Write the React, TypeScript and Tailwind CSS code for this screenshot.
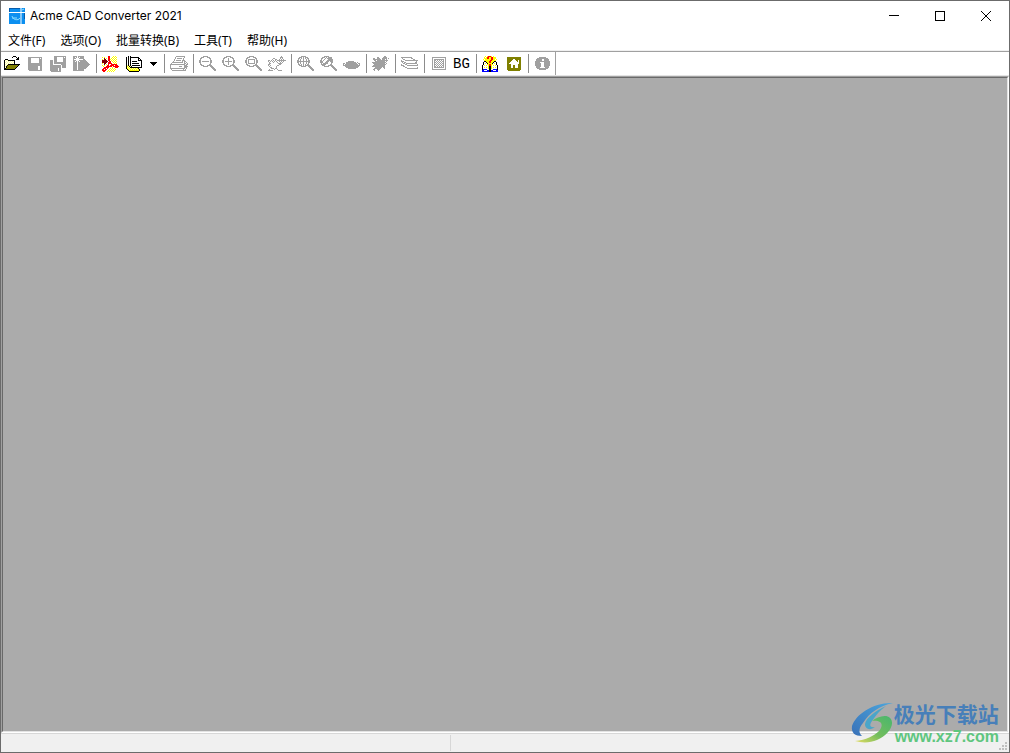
import React from 'react';

const PALETTE: Record<string, string> = {
  k: '#000000',
  w: '#ffffff',
  y: '#ffff00',
  c: '#ffff99',
  d: '#808000',
  o: '#a0a0a0',
  r: '#ff0000',
  m: '#800000',
  b: '#0000ff',
};

const OPEN = [
  '',
  '..........kkk',
  '.........k...k.k',
  '..............kk',
  '..kkk........kkk',
  '.kcwckkkkkkk',
  '.kwcwcwcwcwk',
  '.kcwcwcwcwck',
  '.kwcwcwcwcwk',
  '.kcwckkkkkkkkkkkk',
  '.kwckddddddddddk',
  '.kckddddddddddk',
  '.kwkdddddddddk',
  '.kkdddddddddk',
  '.kkkkkkkkkkk',
];

const SAVE = [
  '',
  '',
  '..oooooooooooooo',
  '..ooo........o.o',
  '..ooo........ooo',
  '..ooo........ooo',
  '..ooo........ooo',
  '..ooo........ooo',
  '..oooooooooooooo',
  '..oooooooooooooo',
  '..oooooooooooooo',
  '..oooooooooo..oo',
  '..oooooooooo..oo',
  '..oooooooooo..oo',
  '..oooooooooo..oo',
  '...ooooooooooooo',
];

const SAVE_ALL = [
  '',
  '.....oooooooooooo',
  '.....ooo......o.o',
  '.....ooo......ooo',
  '.....ooo......ooo',
  '.ooo.ooo......ooo',
  '.ooo.ooo......ooo',
  '.ooo.oooooooooooo',
  '.ooo.oooooooooooo',
  '.ooo........ooooo',
  '.ooooooooooo.oooo',
  '.ooooooooooo.oooo',
  '.ooooooooooo.oooo',
  '.oooooooo.oo',
  '.oooooooo.oo',
  '.oooooooo.oo',
  '..oooooooooo',
];

const EXPORT = [
  '',
  '.oooo.oooooo',
  '.oo.o.o.oooo',
  '.ooo...ooooo',
  '.o.........oo',
  '.ooo...ooooooo',
  '.oo.o.o.ooooooo',
  '.oooo.oooooooooo',
  '.oooo.ooooooooooo',
  '.oooo.oooooooooooo',
  '.oooo.ooooooooooo',
  '.oooo.oooooooooo',
  '.oooo.ooooooooo',
  '.oooo.oooooooo',
  '.oooo.oooooo',
  '.ooooooooooo',
];

const ACROBAT = [
  '',
  '.......rr...y.y',
  '.y.y...rr..y.y.y',
  '...m.y.rr.y.y.y',
  '.y.mm..rry.y.y.y',
  '.mmmmm.rr.y.y.y',
  '.mmmmmm.rr.y.y.y',
  '.mmmmm.rrr..y.y',
  '.y.mm..rrrr..y.y',
  '...m.y.r..rrrrrr',
  '.y.y..rr.rrrr.rrr',
  '..y..rrrrrr.rrrrrr',
  '...rrrrr...y..rrr',
  '..rrr.r..y.y.y',
  '.rr.rr..y.y.y.y',
  '.rrrr..y.y.y.y',
  '..rr..y.y.y.y',
];

const BATCH = [
  '',
  '....k.k',
  '..k.kwkkkkkkkkk',
  '..kwkwkwwwwwwwkk',
  '..kwkwkwwwwwwwkwk',
  '..kwkwkwwwwwwwkkkk',
  '..kwkwkwkkkkkwwwwk',
  '..kwkwkwwwwwwwwwwk',
  '..kwkwkwkkkkkkkwwk',
  '..kwkwkwwwwwwwwwwk',
  '..kckckwkkkkkkkkwk',
  '..kyckckwwwwwwwwwk',
  '..kcyckkkkkkkkkkkk',
  '..kycycycycycyk',
  '...kycycycycycyk',
  '....kyyyyyyyyyyk',
  '.....kkkkkkkkkk',
];

const PRINT = [
  '',
  '.......ooooooooo',
  '......o........o',
  '......o.ooooo.o',
  '.....o........o',
  '.....o.ooooo.ooo',
  '....o........o.oo',
  '...ooooooooooo.o.o',
  '..o............oo.o',
  '.ooooooooooooooo.oo',
  '.o.............ooo',
  '.o........ooo..oooo',
  '.o.............ooo',
  '.ooooooooooooooo.o',
  '..o...........o.o',
  '...oooooooooooooo',
];

const LENS = [
  '',
  '.....ooooo',
  '...ooo...ooo',
  '..oo.......oo',
  '..o.........o',
  '.oo.........oo',
  '.oo.........oo',
  '.oo.........oo',
  '..o.........o',
  '..oo.......oo',
  '...ooo...ooooo',
  '.....ooooo..ooo',
  '.............ooo',
  '..............ooo',
  '...............ooo',
  '................oo',
];

const MINUS = ['', '', '', '', '', '', '....ooooooo'];
const PLUS = ['', '', '', '.......o', '.......o', '.......o', '....ooooooo', '.......o', '.......o', '.......o'];
const FRAME = ['', '', '', '', '....ooooooo', '....o.....o', '....o.....o', '....o.....o', '....ooooooo'];
const GLOBE = [
  '',
  '',
  '.......o',
  '.....o.o.o',
  '....o..o..o',
  '....o..o..o',
  '..ooooooooooo',
  '....o..o..o',
  '....o..o..o',
  '.....o.o.o',
  '.......o',
];
const POINTER = [
  '',
  '',
  '.......o..o.o',
  '......o.oooo',
  '.....o...ooo.o',
  '....o...oooo',
  '...o...ooo.o',
  '...o..ooo',
  '....ooooo',
  '....ooo',
];

const PAN = [
  '',
  '..............o',
  '.............ooo',
  '......oo.....o.o',
  '.....o..oo..o.o.o',
  '.oo.o.o.o.ooooooooo',
  '.o.o.o.o.o..o.o.o',
  '..o...o...o..o.o',
  '..oo.......oooo',
  '.oo.........oo',
  '.o.o......oo',
  '..o......o',
  '...oo....o',
  '....ooo.oo',
  '..o....o..o',
  '.ooooo.....oooo',
];

const PLANET = [
  '',
  '',
  '',
  '',
  '',
  '',
  '......oooooo',
  '....oooooooooo.o',
  '.oo.ooooooooooo.oo',
  '.o.ooooooooooooo.o',
  '.ooooooooooooooooo',
  '...oooooooooooooo',
  '....oooooooooooo',
  '......oooooooo',
];

const REGEN = [
  '',
  '.............oo',
  '......oo....oooo',
  '..oo..ooo..ooooo.o',
  '..oooooooo.ooo.o',
  '...oo.ooooooooooo',
  '....oooooooooo.o',
  '.oooooooooooooo',
  '..oooooooooooo.o',
  '...oooooooooooo',
  '..oooooooooooo',
  '.ooooooooooooo',
  '....ooooooo.oo',
  '...ooooooo...o',
  '..oo..ooo',
  '...o...o',
];

const LAYERS = [
  '',
  '',
  '.ooooooooooo',
  '..o........oo',
  '...oo........oo',
  '.o...ooooooooooooo',
  '.ooo............o',
  '..o.oo.........oo',
  '...oo.ooooooooooo',
  '.o...oo..........o',
  '.ooo...ooooooooooo',
  '...oo',
  '.....oo..........o',
  '.......ooooooooooo',
];

const GRID = [
  '',
  '',
  '...oooooooooooooo',
  '...o............o',
  '...o.oooooooooo.o',
  '...o.oo.o.o.o.o.o',
  '...o.o.o.o.o.oo.o',
  '...o.oo.o.o.o.o.o',
  '...o.o.o.o.o.oo.o',
  '...o.oo.o.o.o.o.o',
  '...o.o.o.o.o.oo.o',
  '...o.oo.o.o.o.o.o',
  '...o.oooooooooo.o',
  '...o............o',
  '...oooooooooooooo',
];

const HELP = [
  '',
  '....y.yrrry.y',
  '...y.yrryyrryyy',
  '...yyyrryyrryyy',
  '..y.yyyyyyrryy.y',
  '...yyyyyyrryyyy',
  '...kkyyyrryyykk',
  '..kwwkyyrryykwwk',
  '..kwywkyyyykwywk',
  '..kwwwyyrryywwwk',
  '.kwywywyrrywywywk',
  '.kwwwwwykkywwwwwk',
  '.kwywywykkywywywk',
  '.kwwwwwykkywwwwwk',
  '.kbbbbwwkkwwbbbbk',
  '.bbwwwbbkkbbwwwbb',
  '.bbbbbbbkkbbbbbbb',
];

const HOME = [
  '',
  '',
  '...dddddddddddddd',
  '...dddddddddddddd',
  '...ddddddwwdddddd',
  '...dddddwwwwddwdd',
  '...ddddwwwwwwdwdd',
  '...dddwwwwwwwwwdd',
  '...ddwwwwwwwwwwdd',
  '...ddddwwwwwwwddd',
  '...ddddwwddwwwddd',
  '...ddddwwddwwwddd',
  '...ddddwwddwwwddd',
  '...dddddddddddddd',
  '...dddddddddddddd',
  '....dddddddddddd',
];

const INFO = [
  '',
  '',
  '......ooooooo',
  '....ooooooooooo',
  '...oooooo..ooooo',
  '...oooooo..ooooo',
  '..ooooooooooooooo',
  '..ooooo....oooooo',
  '..oooooo...oooooo',
  '..oooooo...oooooo',
  '..oooooo...oooooo',
  '...ooooo...ooooo',
  '...oooo.....oooo',
  '....ooooooooooo',
  '......ooooooo',
];

const PixelIcon: React.FC<{ layers: string[][] }> = ({ layers }) => (
  <svg width="19" height="17" viewBox="0 0 19 17" shapeRendering="crispEdges" aria-hidden="true" className="shrink-0">
    {layers.map((rows, l) =>
      rows.map((row, y) =>
        row.split('').map((ch, x) =>
          PALETTE[ch] ? <rect key={`${l}-${x}-${y}`} x={x} y={y} width="1" height="1" fill={PALETTE[ch]} /> : null
        )
      )
    )}
  </svg>
);

interface Tool {
  label: string;
  layers: string[][];
  disabled?: boolean;
}

const TOOL_GROUPS: Tool[][] = [
  [
    { label: '打开', layers: [OPEN] },
    { label: '保存', layers: [SAVE], disabled: true },
    { label: '全部保存', layers: [SAVE_ALL], disabled: true },
    { label: '导出', layers: [EXPORT], disabled: true },
  ],
  [
    { label: 'PDF', layers: [ACROBAT] },
    { label: '批量转换', layers: [BATCH] },
  ],
  [{ label: '打印', layers: [PRINT], disabled: true }],
  [
    { label: '缩小', layers: [LENS, MINUS], disabled: true },
    { label: '放大', layers: [LENS, PLUS], disabled: true },
    { label: '窗口缩放', layers: [LENS, FRAME], disabled: true },
    { label: '平移', layers: [PAN], disabled: true },
  ],
  [
    { label: '全部显示', layers: [LENS, GLOBE], disabled: true },
    { label: '上一视图', layers: [LENS, POINTER], disabled: true },
    { label: '三维视图', layers: [PLANET], disabled: true },
  ],
  [{ label: '重新生成', layers: [REGEN], disabled: true }],
  [{ label: '图层', layers: [LAYERS], disabled: true }],
  [{ label: '布局', layers: [GRID], disabled: true }],
  [
    { label: '帮助', layers: [HELP] },
    { label: '主页', layers: [HOME] },
  ],
  [{ label: '关于', layers: [INFO], disabled: true }],
];

// groups that end in a control of their own
const BATCH_GROUP = 1;
const BG_GROUP = 7;

const MENUS = ['文件(F)', '选项(O)', '批量转换(B)', '工具(T)', '帮助(H)'];

const AppIcon = () => (
  <svg width="16" height="16" viewBox="0 0 16 16" aria-hidden="true">
    <path d="M0 0h16v16H0z" fill="#0c8ff0" />
    <path d="M0 4.5h11M12 0v16M11 4.5h5" stroke="#fff" strokeWidth="1" />
    <path d="M3 8c1 4 6 5 8 2M3 10h5M13 2l2-1" stroke="#8ee0ff" strokeWidth="1" fill="none" />
    <path d="M0 .5h11M.5 0v4M15.5 5v6" stroke="#075cab" strokeWidth="1" />
  </svg>
);

const TitleBar = () => (
  <header className="flex h-[30px] items-center bg-white pl-2">
    <AppIcon />
    <h1 className="ml-[5px] flex-1 font-['Inter',sans-serif] text-[12px] leading-4">Acme CAD Converter 2021</h1>
    <button aria-label="最小化" className="flex h-full w-[46px] items-center justify-center hover:bg-gray-200">
      <svg width="10" height="10" viewBox="0 0 10 10" shapeRendering="crispEdges"><path d="M0 4h10v1H0z" /></svg>
    </button>
    <button aria-label="最大化" className="flex h-full w-[46px] items-center justify-center hover:bg-gray-200">
      <svg width="10" height="10" viewBox="0 0 10 10" shapeRendering="crispEdges"><path d="M.5 .5h9v9h-9z" fill="none" stroke="#000" /></svg>
    </button>
    <button aria-label="关闭" className="flex h-full w-[46px] items-center justify-center hover:bg-red-500">
      <svg width="10" height="10" viewBox="0 0 10 10"><path d="M0 0l10 10M10 0L0 10" fill="none" stroke="#000" /></svg>
    </button>
  </header>
);

const Separator = () => (
  <div className="flex w-[6px] justify-center py-[2px]">
    <div className="w-px bg-[#8c8c8c]"></div>
  </div>
);

const ToolButton: React.FC<{ tool: Tool }> = ({ tool }) => (
  <button aria-label={tool.label} disabled={tool.disabled} className="flex w-[23px] items-center justify-center">
    <PixelIcon layers={tool.layers} />
  </button>
);

const Toolbar = () => (
  <div className="border-b border-[#e3e3e3] bg-white">
    <div role="toolbar" className="flex h-[23px] w-fit border-r border-[#a0a0a0] pr-px">
      {TOOL_GROUPS.map((group, i) => (
        <React.Fragment key={i}>
          {i > 0 && <Separator />}
          {group.map((tool) => <ToolButton key={tool.label} tool={tool} />)}
          {i === BATCH_GROUP && (
            <button aria-label="更多" className="flex w-4 items-center justify-center">
              <svg width="7" height="4" viewBox="0 0 7 4" shapeRendering="crispEdges">
                <path d="M0 0h7v1H0zM1 1h5v1H1zM2 2h3v1H2zM3 3h1v1H3z" />
              </svg>
            </button>
          )}
          {i === BG_GROUP && (
            <button className="flex w-[23px] items-center justify-center font-['Liberation_Mono',monospace] text-[14px] leading-4">BG</button>
          )}
        </React.Fragment>
      ))}
    </div>
  </div>
);

const StatusBar = () => (
  <footer className="flex h-[19px] border-t border-[#d7d7d7] bg-[#f0f0f0]">
    <div className="my-px w-[450px] border-r border-[#d7d7d7]"></div>
    <div className="flex flex-1 items-end justify-end p-px">
      <svg width="9" height="9" viewBox="0 0 9 9" fill="#bfbfbf" shapeRendering="crispEdges">
        <path d="M6 0h2v2H6zM3 3h2v2H3zM6 3h2v2H6zM0 6h2v2H0zM3 6h2v2H3zM6 6h2v2H6z" />
      </svg>
    </div>
  </footer>
);

const Watermark = () => (
  <div className="pointer-events-none absolute right-[10px] bottom-[5px] flex items-center">
    <svg width="43" height="42" viewBox="0 0 43 42" aria-hidden="true">
      <defs>
        <linearGradient id="swirlBlue" x1="1" y1="0" x2="0" y2="1">
          <stop offset="0" stopColor="#4ba6dc" />
          <stop offset="1" stopColor="#3971b8" />
        </linearGradient>
        <linearGradient id="swirlGreen" x1="1" y1="0" x2="0" y2="1">
          <stop offset="0" stopColor="#49b66e" />
          <stop offset=".55" stopColor="#72bd5c" />
          <stop offset="1" stopColor="#e4dc63" />
        </linearGradient>
      </defs>
      <path d="M42 1C23 0 5 12 1 24c-1 7 3 10 10 10-4-4-3-8 1-13C18 11 28 4 42 1z" fill="url(#swirlBlue)" />
      <path d="M35 4C24 9 15 16 14 22c0 5 5 7 10 3-5 1-6-2-3-6 4-6 8-11 14-15z" fill="#4aa5c9" />
      <path d="M21 19c5-4 14-7 18-3 6 6-2 18-13 22-7 3-15 3-22 1 11-1 19-5 24-10 5-6 3-11-7-10z" fill="url(#swirlGreen)" />
    </svg>
    <div className="flex flex-col">
      <span className="font-['Noto_Sans_CJK_SC',sans-serif] text-[21px] leading-7 font-bold text-[#477fb9]">极光下载站</span>
      <span className="pl-px font-['Liberation_Sans',sans-serif] text-[16px] leading-5 font-bold text-[#5fc67f]">www.xz7.com</span>
    </div>
  </div>
);

const App: React.FC = () => {
  return (
    <div className="relative flex min-h-screen flex-col border border-[#6b6b6b] bg-white font-['Noto_Sans','Noto_Sans_CJK_SC',sans-serif] text-black">
      <TitleBar />
      <nav className="flex h-[20px] items-center gap-[15px] border-b border-[#f0f0f0] pt-px pl-[7px] text-[12px] leading-4">
        {MENUS.map((menu) => <button key={menu}>{menu}</button>)}
      </nav>
      <div className="border-t border-[#a0a0a0]">
        <Toolbar />
      </div>
      <main className="flex flex-1 flex-col border-t border-r border-b border-l border-t-[#a0a0a0] border-r-white border-b-white border-l-[#a0a0a0]">
        <div className="flex-1 border border-t-[#696969] border-r-[#e3e3e3] border-b-[#e3e3e3] border-l-[#696969] bg-[#ababab]"></div>
      </main>
      <StatusBar />
      <Watermark />
    </div>
  );
};

export default App;
